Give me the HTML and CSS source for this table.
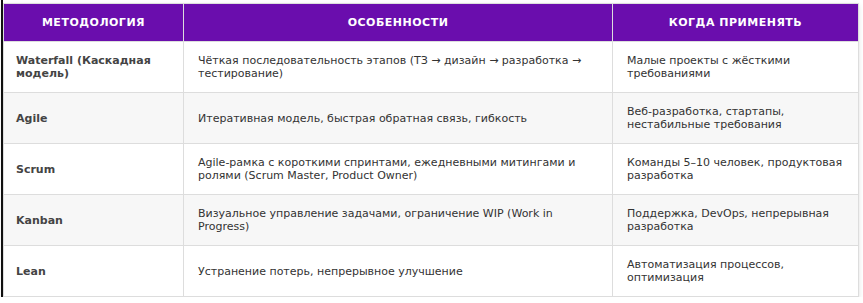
FILE: index.html
```html
<!DOCTYPE html>
<html lang="ru">
<head>
<meta charset="utf-8">
<link rel="stylesheet" href="styles.css">
</head>
<body>
<div class="wrap">
  <table class="methods">
    <colgroup>
      <col class="c1">
      <col class="c2">
      <col class="c3">
    </colgroup>
    <thead>
      <tr>
        <th>Методология</th>
        <th>Особенности</th>
        <th>Когда применять</th>
      </tr>
    </thead>
    <tbody>
      <tr>
        <td class="name">Waterfall (Каскадная модель)</td>
        <td>Чёткая последовательность этапов (ТЗ → дизайн → разработка → тестирование)</td>
        <td>Малые проекты с жёсткими требованиями</td>
      </tr>
      <tr>
        <td class="name">Agile</td>
        <td>Итеративная модель, быстрая обратная связь, гибкость</td>
        <td>Веб-разработка, стартапы, нестабильные требования</td>
      </tr>
      <tr>
        <td class="name">Scrum</td>
        <td>Agile-рамка с короткими спринтами, ежедневными митингами и ролями (Scrum Master, Product Owner)</td>
        <td>Команды 5–10 человек, продуктовая разработка</td>
      </tr>
      <tr>
        <td class="name">Kanban</td>
        <td>Визуальное управление задачами, ограничение WIP (Work in Progress)</td>
        <td>Поддержка, DevOps, непрерывная разработка</td>
      </tr>
      <tr>
        <td class="name">Lean</td>
        <td>Устранение потерь, непрерывное улучшение</td>
        <td>Автоматизация процессов, оптимизация</td>
      </tr>
    </tbody>
  </table>
</div>
</body>
</html>
```
FILE: styles.css
```css
html, body {
  margin: 0;
  padding: 0;
  background: #fff;
}
body {
  font-family: "DejaVu Sans", Verdana, sans-serif;
  font-size: 11px;
  color: #333;
}
.wrap {
  padding-top: 3px;
  margin-left: 1px;
  border-left: 2px solid #111;
  width: 855px;
}
.methods {
  border-collapse: collapse;
  table-layout: fixed;
  width: 855px;
  box-shadow: 0 2px 5px rgba(0, 0, 0, 0.12);
  border: 1px solid #ddd;
}
.c1 { width: 180px; }
.c2 { width: 429px; }
.c3 { width: 246px; }
.methods th {
  background: #6a0dad;
  color: #fff;
  font-weight: bold;
  text-transform: uppercase;
  letter-spacing: 0.5px;
  text-align: center;
  padding: 12px 14px;
  line-height: 13px;
  border: 1px solid #ddd;
  border-top: 0;
}
.methods td {
  padding: 12px 14px;
  line-height: 13px;
  border: 1px solid #ddd;
  vertical-align: middle;
  text-align: left;
}
.methods td.name {
  font-weight: bold;
  color: #444;
  padding-left: 12px;
}
.methods tbody tr:nth-child(even) td {
  background: #f7f7f7;
}
```
